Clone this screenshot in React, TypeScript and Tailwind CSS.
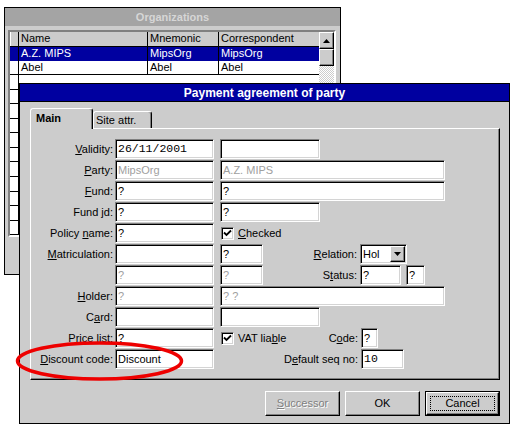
import React from "react";

const sunken =
  "bg-white border border-t-[#808080] border-l-[#808080] border-b-white border-r-white shadow-[inset_1px_1px_0_#000,inset_-1px_-1px_0_#d4d4d4]";
const raised =
  "bg-[#cccccc] border border-t-white border-l-white border-b-black border-r-black shadow-[inset_-1px_-1px_0_#808080]";

function Field({
  className = "",
  children,
  disabled = false,
  mono = false,
}: {
  className?: string;
  children?: React.ReactNode;
  disabled?: boolean;
  mono?: boolean;
}) {
  return (
    <div
      className={`h-[20px] shrink-0 ${sunken} flex items-center pl-[2px] overflow-hidden whitespace-nowrap leading-none ${
        mono ? "font-['Liberation_Mono',monospace] text-[11.5px]" : "text-[11px]"
      } ${disabled ? "text-[#a0a0a0]" : "text-black"} ${className}`}
    >
      {children}
    </div>
  );
}

function Label({ className = "", children }: { className?: string; children: React.ReactNode }) {
  return (
    <div className={`shrink-0 text-right text-[11px] leading-none whitespace-nowrap ${className}`}>{children}</div>
  );
}

function Row({ label, children }: { label?: React.ReactNode; children?: React.ReactNode }) {
  return (
    <div className="flex items-center h-[20px]">
      <Label className="w-[82px]">{label}</Label>
      <div className="w-[2px] shrink-0" />
      {children}
    </div>
  );
}

function Check({ children }: { children: React.ReactNode }) {
  return (
    <div className="flex items-center pl-[1px]">
      <div className={`w-[13px] h-[13px] ${sunken} flex items-center justify-center`}>
        <svg width="9" height="9" viewBox="0 0 9 9">
          <path d="M1 3.5 L3.5 6 L8 1.5" stroke="#000" strokeWidth="1.8" fill="none" />
        </svg>
      </div>
      <span className="ml-[4px] text-[11px] leading-none">{children}</span>
    </div>
  );
}

function Btn({
  children,
  className = "",
}: {
  children: React.ReactNode;
  className?: string;
}) {
  return (
    <div className={`w-[75px] h-[25px] ${raised} flex items-center justify-center text-[11px] ${className}`}>
      {children}
    </div>
  );
}

export default function App() {
  const rowsLeft = [0, 1, 2, 3, 4, 5, 6, 7, 8, 9, 10];
  return (
    <div className="relative w-[513px] h-[427px] bg-white overflow-hidden font-['Liberation_Sans',Arial,sans-serif] text-black">
      {/* Organizations window */}
      <div className="absolute left-[4px] top-[7px] w-[337px] h-[268px] border border-black bg-[#cccccc] flex flex-col">
        <div className="h-[18px] bg-[#a4a4a4] text-[#d6d6d6] font-bold text-[11px] flex items-center justify-center">
          Organizations
        </div>
        <div className="mt-[4px] ml-[3px] w-[328px] h-[207px] border-2 border-t-[#808080] border-l-[#808080] border-b-white border-r-white bg-white flex">
          <div className="flex flex-col w-[309px]">
            {/* header */}
            <div className="flex h-[17px] bg-[#cccccc] border-b border-black text-[11px] leading-none">
              <div className="w-[9px] border-r border-black border-l border-l-white" />
              <div className="w-[129px] border-r border-black flex items-center pl-[2px]">Name</div>
              <div className="w-[71px] border-r border-black flex items-center pl-[2px]">Mnemonic</div>
              <div className="w-[100px] flex items-center pl-[2px]">Correspondent</div>
            </div>
            <div className="flex h-[17px] bg-[#0000a0] text-white text-[11px] leading-none">
              <div className="w-[9px] border-r border-black" />
              <div className="w-[129px] border-r border-black flex items-center pl-[2px]">A.Z. MIPS</div>
              <div className="w-[71px] border-r border-black flex items-center pl-[2px]">MipsOrg</div>
              <div className="w-[100px] flex items-center pl-[2px]">MipsOrg</div>
            </div>
            <div className="flex h-[17px] text-[11px] leading-none border-b border-[#000]">
              <div className="w-[9px] border-r border-black" />
              <div className="w-[129px] border-r border-black flex items-center pl-[2px]">Abel</div>
              <div className="w-[71px] border-r border-black flex items-center pl-[2px]">Abel</div>
              <div className="w-[100px] flex items-center pl-[2px]">Abel</div>
            </div>
            {rowsLeft.map((i) => (
              <div key={i} className="flex h-[17px] border-b border-black">
                <div className="w-[9px] border-r border-black" />
              </div>
            ))}
          </div>
          <div className="w-[17px] flex flex-col">
            <div className={`h-[17px] ${raised} flex items-center justify-center`}>
              <svg width="7" height="4" viewBox="0 0 7 4">
                <path d="M3.5 0 L7 4 L0 4 Z" fill="#000" />
              </svg>
            </div>
            <div className={`h-[17px] ${raised}`} />
            <div className="flex-1 bg-[repeating-conic-gradient(#cccccc_0%_25%,#ffffff_0%_50%)] bg-[length:2px_2px]" />
          </div>
        </div>
      </div>

      {/* Payment agreement dialog */}
      <div className="absolute left-[19px] top-[83px] w-[491px] h-[341px] border border-black bg-[#cccccc] flex flex-col">
        <div className="h-[18px] bg-[#0000a0] border-b border-black text-white font-bold text-[12px] flex items-center justify-center leading-none">
          Payment agreement of party
        </div>
        <div className="pt-[6px] pl-[10px] pr-[9px]">
          {/* tabs */}
          <div className="flex items-end h-[20px]">
            <div className="relative z-10 w-[63px] h-[21px] -mb-[1px] bg-[#cccccc] border-t border-l border-white border-r border-r-black rounded-t-[3px] shadow-[inset_-1px_0_0_#808080] flex items-start pt-[4px] pl-[5px] text-[11px] font-bold leading-none">
              Main
            </div>
            <div className="w-[59px] h-[17px] bg-[#cccccc] border-t border-l border-white border-r border-r-black rounded-t-[3px] shadow-[inset_-1px_0_0_#808080] flex items-start pt-[3px] pl-[2px] text-[11px] leading-none">
              Site attr.
            </div>
          </div>
          {/* panel */}
          <div className="h-[252px] border border-t-white border-l-white border-r-black border-b-black shadow-[inset_-1px_-1px_0_#808080] pt-[10px] flex flex-col gap-[1px]">
            <Row label={<><u>V</u>alidity:</>}>
              <Field mono className="w-[99px]">26/11/2001</Field>
              <div className="w-[6px] shrink-0" />
              <Field className="w-[100px]" />
            </Row>
            <Row label={<><u>P</u>arty:</>}>
              <Field disabled className="w-[99px]">MipsOrg</Field>
              <div className="w-[6px] shrink-0" />
              <Field disabled className="w-[225px]">A.Z. MIPS</Field>
            </Row>
            <Row label={<><u>F</u>und:</>}>
              <Field className="w-[99px]">?</Field>
              <div className="w-[6px] shrink-0" />
              <Field className="w-[225px]">?</Field>
            </Row>
            <Row label={<>Fund <u>j</u>d:</>}>
              <Field className="w-[99px]">?</Field>
              <div className="w-[6px] shrink-0" />
              <Field className="w-[100px]">?</Field>
            </Row>
            <Row label={<>Policy <u>n</u>ame:</>}>
              <Field className="w-[99px]">?</Field>
              <div className="w-[6px] shrink-0" />
              <Check>
                <u>C</u>hecked
              </Check>
            </Row>
            <Row label={<><u>M</u>atriculation:</>}>
              <Field className="w-[99px]" />
              <div className="w-[6px] shrink-0" />
              <Field className="w-[43px] text-[10px]">?</Field>
              <Label className="w-[94px]">
                <u>R</u>elation:
              </Label>
              <div className="w-[3px] shrink-0" />
              <div className={`w-[47px] h-[20px] ${sunken} flex items-center pl-[2px] text-[11px] leading-none`}>
                <span className="flex-1">Hol</span>
                <div className={`w-[15px] h-[16px] mr-[1px] ${raised} flex items-center justify-center`}>
                  <svg width="7" height="4" viewBox="0 0 7 4">
                    <path d="M0 0 L7 0 L3.5 4 Z" fill="#000" />
                  </svg>
                </div>
              </div>
            </Row>
            <Row>
              <Field disabled className="w-[99px]">?</Field>
              <div className="w-[6px] shrink-0" />
              <Field disabled className="w-[43px] text-[10px]">?</Field>
              <Label className="w-[94px]">
                S<u>t</u>atus:
              </Label>
              <div className="w-[3px] shrink-0" />
              <Field className="w-[41px]">?</Field>
              <div className="w-[5px] shrink-0" />
              <Field className="w-[19px]">?</Field>
            </Row>
            <Row label={<><u>H</u>older:</>}>
              <Field disabled className="w-[99px]">?</Field>
              <div className="w-[6px] shrink-0" />
              <Field disabled className="w-[225px]">? ?</Field>
            </Row>
            <Row label={<>C<u>a</u>rd:</>}>
              <Field className="w-[99px]" />
              <div className="w-[6px] shrink-0" />
              <Field className="w-[100px]" />
            </Row>
            <Row label={<>Price <u>l</u>ist:</>}>
              <Field className="w-[99px]">?</Field>
              <div className="w-[6px] shrink-0" />
              <div className="w-[100px] shrink-0">
                <Check>
                  VAT lia<u>b</u>le
                </Check>
              </div>
              <Label className="w-[38px]">
                C<u>o</u>de:
              </Label>
              <div className="w-[3px] shrink-0" />
              <Field className="w-[17px]">?</Field>
            </Row>
            <Row label={<><u>D</u>iscount code:</>}>
              <Field className="w-[99px]">Discount</Field>
              <div className="w-[6px] shrink-0" />
              <Label className="w-[138px]">
                D<u>e</u>fault seq no:
              </Label>
              <div className="w-[3px] shrink-0" />
              <Field mono className="w-[43px]">10</Field>
            </Row>
          </div>
        </div>
        {/* buttons */}
        <div className="mt-[11px] flex justify-end gap-[5px] pr-[9px]">
          <Btn className="text-[#808080] [text-shadow:1px_1px_0_#ffffff]">
            <span>
              <u>S</u>uccessor
            </span>
          </Btn>
          <Btn>OK</Btn>
          <div className="w-[75px] h-[25px] border border-black">
            <div className={`w-full h-full ${raised} flex items-center justify-center p-[3px]`}>
              <div className="w-full h-full border border-dotted border-black flex items-center justify-center text-[11px]">
                Cancel
              </div>
            </div>
          </div>
        </div>
      </div>

      {/* red ellipse annotation */}
      <svg className="absolute left-0 top-0 pointer-events-none" width="513" height="427">
        <ellipse cx="99.5" cy="361" rx="82" ry="18" fill="none" stroke="#ee0000" strokeWidth="3.5" />
      </svg>
    </div>
  );
}
